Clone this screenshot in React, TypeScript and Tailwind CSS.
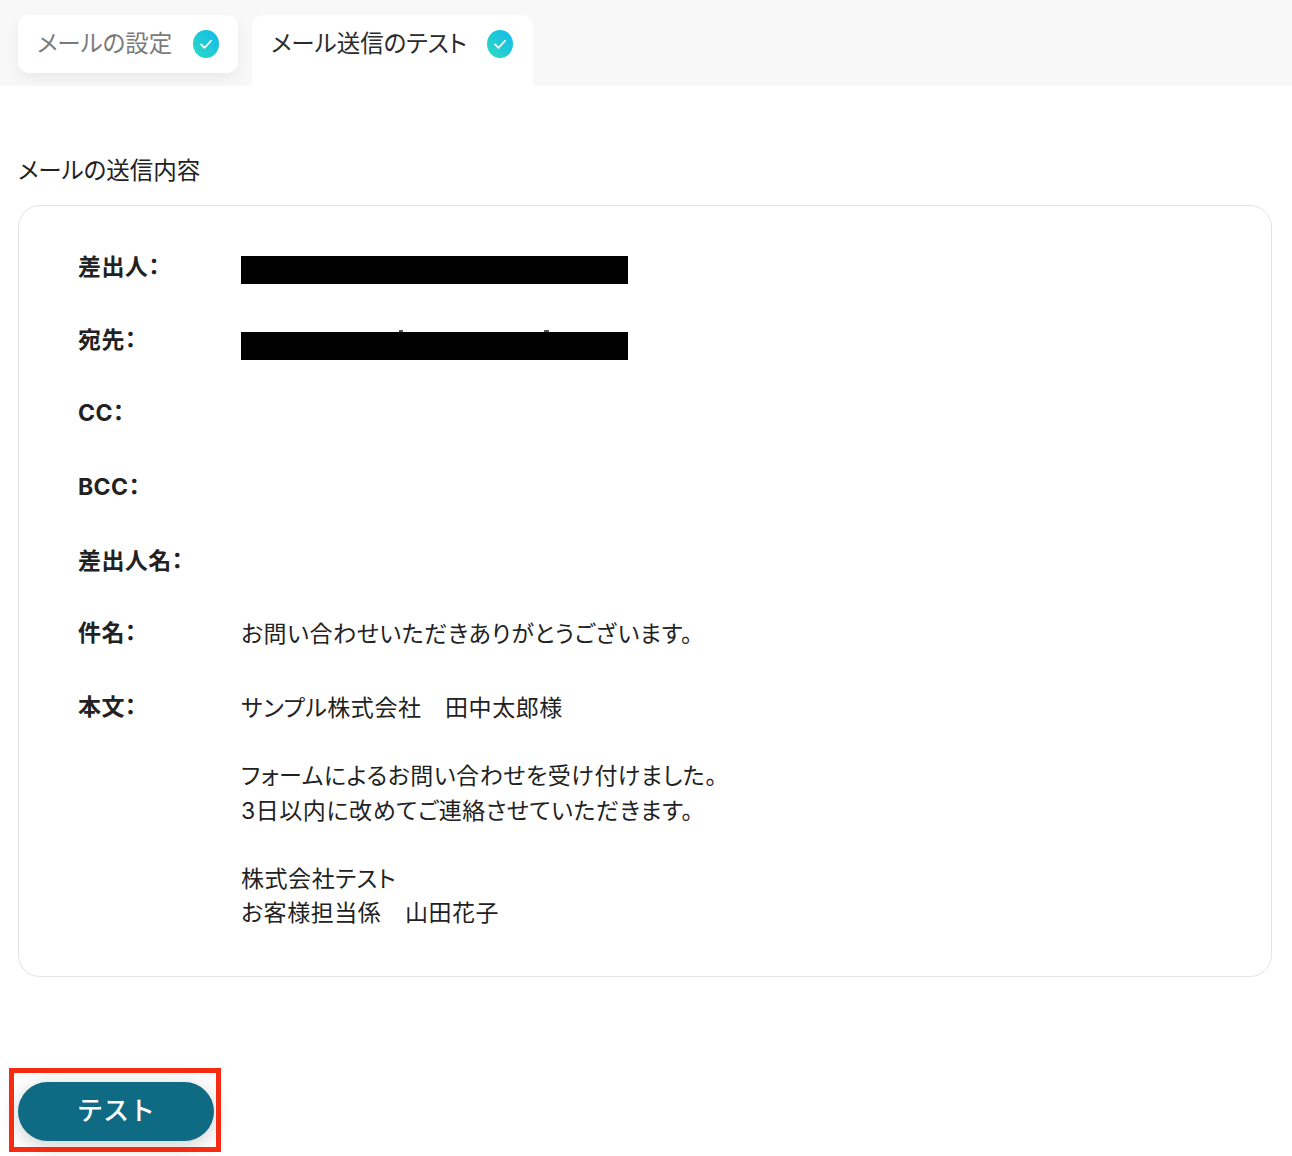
const font = { fontFamily: 'Inter, "Noto Sans CJK JP", sans-serif' };

function Check() {
  return (
    <svg width="26" height="28" viewBox="0 0 26 28" className="shrink-0">
      <defs>
        <linearGradient id="g" x1="0" y1="1" x2="1" y2="0">
          <stop offset="0" stopColor="#2ddcc0" />
          <stop offset="1" stopColor="#12b8ee" />
        </linearGradient>
      </defs>
      <ellipse cx="13" cy="14" rx="13" ry="14" fill="url(#g)" />
      <path d="M8 14.3l3.5 3.6 6.6-7.2" fill="none" stroke="#fff" strokeWidth="1.7" strokeLinecap="round" strokeLinejoin="round" />
    </svg>
  );
}

function Row({ label, h, children }: { label: string; h: string; children?: React.ReactNode }) {
  return (
    <div className={`flex ${h}`}>
      <div className="w-[163px] shrink-0 pt-[2px] text-[23px] leading-[32px] font-bold tracking-[0.4px] text-[#222] [font-feature-settings:'palt']">{label}</div>
      <div className="text-[23px] leading-[34.3px] tracking-[0.55px] text-[#222] [font-feature-settings:'palt']">{children}</div>
    </div>
  );
}

export default function App() {
  return (
    <div className="w-[1292px] h-[1156px] bg-white overflow-hidden" style={font}>
      <div className="h-[86px] bg-[#f8f8f8] flex items-start gap-[14px] pl-[18px] pt-[15px]">
        <div className="w-[220px] h-[58px] rounded-[11px] bg-white flex items-center pl-[19px] pr-[19px] justify-between shadow-[0_6px_14px_rgba(0,0,0,0.06)]">
          <span className="text-[23.5px] leading-[34px] text-[#7b7b7b] whitespace-nowrap [font-feature-settings:'palt']">メールの設定</span>
          <Check />
        </div>
        <div className="w-[281px] h-[71px] rounded-t-[11px] bg-white flex items-start pt-[15px] pl-[19px] pr-[20px] justify-between">
          <span className="text-[23.5px] leading-[28px] text-[#2b2b2b] whitespace-nowrap [font-feature-settings:'palt']">メール送信のテスト</span>
          <Check />
        </div>
      </div>

      <div className="px-[18px] w-[1290px]">
        <h2 className="mt-[68px] text-[23.5px] leading-[34px] font-normal text-[#222] [font-feature-settings:'palt']">メールの送信内容</h2>
        <div className="mt-[17px] h-[772px] rounded-[22px] border border-[#e3e3e3] pl-[59px] pt-[43px]">
          <Row label="差出人：" h="h-[73px]">
            <div className="w-[387px] h-[28px] mt-[7px] bg-black" />
          </Row>
          <Row label="宛先：" h="h-[73px]">
            <div className="relative w-[387px] h-[28px] mt-[10px] bg-black">
              <div className="absolute left-[158px] -top-[2px] w-[4px] h-[2px] bg-[#555]" />
              <div className="absolute left-[303px] -top-[2px] w-[5px] h-[2px] bg-[#555]" />
            </div>
          </Row>
          <Row label="CC：" h="h-[74px]" />
          <Row label="BCC：" h="h-[74px]" />
          <Row label="差出人名：" h="h-[72px]" />
          <Row label="件名：" h="h-[74px]">
            <div className="mt-[2px]">お問い合わせいただきありがとうございます。</div>
          </Row>
          <Row label="本文：" h="h-[250px]">
            <div className="mt-[2px]">
              <div>サンプル株式会社　田中太郎様</div>
              <div className="mt-[34px]">フォームによるお問い合わせを受け付けました。</div>
              <div>3日以内に改めてご連絡させていただきます。</div>
              <div className="mt-[34px]">株式会社テスト</div>
              <div>お客様担当係　山田花子</div>
            </div>
          </Row>
        </div>

        <div className="relative mt-[105px] w-[196px]">
          <button className="w-[196px] h-[59px] rounded-full bg-[#0f6b84] text-white text-[26px] leading-[34px] font-medium pb-[2px] shadow-[0_4px_20px_rgba(0,0,0,0.2)]">
            テスト
          </button>
          <div className="absolute -left-[9px] -top-[14px] w-[212px] h-[84px] border-[5px] border-[#f52b12]" />
        </div>
      </div>
    </div>
  );
}
